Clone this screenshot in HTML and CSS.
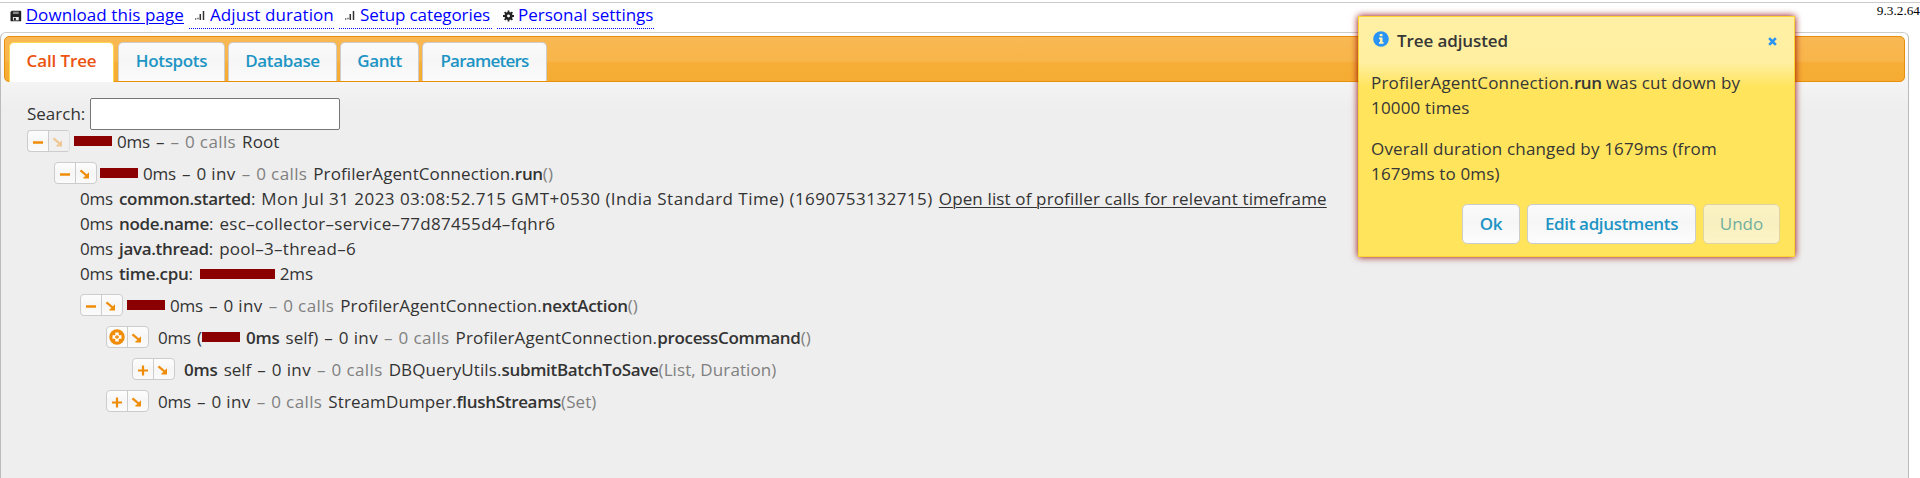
FILE: index.html
```html
<!DOCTYPE html>
<html lang="en">
<head>
<meta charset="utf-8">
<title>Call Tree</title>
<link rel="stylesheet" href="styles.css">
</head>
<body>
<svg class="defs" width="0" height="0">
  <symbol id="minus" viewBox="0 0 12 12"><path d="M1 6.500h10" stroke="currentColor" stroke-width="2.400"/></symbol>
  <symbol id="plus" viewBox="0 0 12 12"><path d="M1 6.500h10M6 1.500v10" stroke="currentColor" stroke-width="2.200"/></symbol>
  <symbol id="circle-plus" viewBox="0 0 16 16"><circle cx="8" cy="8" r="7.700" fill="currentColor"/><path d="M6.300 3.500h3.400v2.800h2.800v3.400H9.700v2.800H6.300V9.700H3.500V6.300h2.800z" fill="#fff"/><path d="M6 8h4M8 6v4" stroke="currentColor" stroke-width="1.300"/></symbol>
  <symbol id="arrow" viewBox="0 0 12 12"><path d="M1.500 2.300l6 5.200" stroke="currentColor" stroke-width="2.300"/><path d="M10 4.300V10.500H4.500V9l1.500-.5 2.500-2.700z" fill="currentColor"/></symbol>
  <symbol id="signal" viewBox="0 0 10 10"><path d="M0 9h1.300M2.300 8.500h1.400" stroke="#555" stroke-width="1.600"/><path d="M5.300 4v6M8.500 1v9" stroke="#333" stroke-width="1.500"/></symbol>
</svg>

<header class="toolbar">
  <a class="link download"><svg class="disk" viewBox="0 0 12 12"><path d="M2 .5h8.500a1 1 0 0 1 1 1v9a1 1 0 0 1-1 1h-9a1 1 0 0 1-1-1v-8.500z" fill="#222"/><path d="M3 1.500h6v2.500H3z" fill="#888"/><path d="M3 7h6v3.500h-6z" fill="#eee"/><path d="M4 8h2v2.500H4z" fill="#222"/></svg><span class="u">Download this page</span></a>
  <a class="link dotted"><svg class="sig-icon"><use href="#signal"/></svg>Adjust duration</a>
  <a class="link dotted setup"><svg class="sig-icon"><use href="#signal"/></svg>Setup categories</a>
  <a class="link dotted personal"><svg class="gear" viewBox="0 0 12 12"><circle cx="6" cy="6" r="3" fill="none" stroke="#222" stroke-width="2.800"/><path d="M6 0v2.500M6 9.500v2.500M0 6h2.500M9.500 6h2.500M1.800 1.800l1.800 1.800M8.400 8.400l1.800 1.800M1.800 10.200l1.800-1.800M8.400 3.600l1.800-1.800" stroke="#222" stroke-width="2"/></svg>Personal settings</a>
  <span class="version">9.3.2.64</span>
</header>

<main class="panel">
  <nav class="tabs">
    <a class="tab active">Call Tree</a>
    <a class="tab hotspots">Hotspots</a>
    <a class="tab database">Database</a>
    <a class="tab gantt">Gantt</a>
    <a class="tab parameters">Parameters</a>
  </nav>

  <section class="content">
    <label class="search">Search: <input type="text"></label>

    <div class="row level0">
      <span class="pair"><span class="btn"><svg class="ic"><use href="#minus"/></svg></span><span class="btn off"><svg class="ic arrow"><use href="#arrow"/></svg></span></span>
      <i class="bar"></i><span class="ms">0ms</span><span>–</span><span class="dim">–</span><span class="dim calls">0 calls</span><span class="name">Root</span>
    </div>
    <div class="row level1">
      <span class="pair"><span class="btn"><svg class="ic"><use href="#minus"/></svg></span><span class="btn"><svg class="ic arrow"><use href="#arrow"/></svg></span></span>
      <i class="bar"></i><span class="ms">0ms</span><span>–</span><span class="inv">0 inv</span><span class="dim">–</span><span class="dim calls">0 calls</span><span class="name">ProfilerAgentConnection.<b>run</b><span class="dim">()</span></span>
    </div>

    <div class="params">
      <div class="param"><span class="ms">0ms</span><span><b>common.started</b>:</span><span class="date">Mon Jul 31 2023 03:08:52.715 GMT+0530 (India Standard Time) (1690753132715)</span><a class="open">Open list of profiller calls for relevant timeframe</a></div>
      <div class="param"><span class="ms">0ms</span><span><b>node.name</b>:</span><span class="id">esc–collector–service–77d87455d4–fqhr6</span></div>
      <div class="param"><span class="ms">0ms</span><span><b>java.thread</b>:</span><span class="thread">pool–3–thread–6</span></div>
      <div class="param"><span class="ms">0ms</span><span><b>time.cpu</b>:</span><i class="bar wide"></i><span class="ms">2ms</span></div>
    </div>

    <div class="row level2">
      <span class="pair"><span class="btn"><svg class="ic"><use href="#minus"/></svg></span><span class="btn"><svg class="ic arrow"><use href="#arrow"/></svg></span></span>
      <i class="bar"></i><span class="ms">0ms</span><span>–</span><span class="inv">0 inv</span><span class="dim">–</span><span class="dim calls">0 calls</span><span class="name">ProfilerAgentConnection.<b>nextAction</b><span class="dim">()</span></span>
    </div>
    <div class="row level3 nobar">
      <span class="pair"><span class="btn"><svg class="ic big"><use href="#circle-plus"/></svg></span><span class="btn"><svg class="ic arrow"><use href="#arrow"/></svg></span></span>
      <span class="ms">0ms</span><span class="self">(<i class="bar"></i><b class="ms">0ms</b></span><span>self)</span><span>–</span><span class="inv">0 inv</span><span class="dim">–</span><span class="dim calls">0 calls</span><span class="name">ProfilerAgentConnection.<b>processCommand</b><span class="dim">()</span></span>
    </div>
    <div class="row level4 nobar">
      <span class="pair"><span class="btn"><svg class="ic"><use href="#plus"/></svg></span><span class="btn"><svg class="ic arrow"><use href="#arrow"/></svg></span></span>
      <b class="ms">0ms</b><span>self</span><span>–</span><span class="inv">0 inv</span><span class="dim">–</span><span class="dim calls">0 calls</span><span class="name">DBQueryUtils.<b>submitBatchToSave</b><span class="dim">(List, Duration)</span></span>
    </div>
    <div class="row level3 nobar">
      <span class="pair"><span class="btn"><svg class="ic"><use href="#plus"/></svg></span><span class="btn"><svg class="ic arrow"><use href="#arrow"/></svg></span></span>
      <span class="ms">0ms</span><span>–</span><span class="inv">0 inv</span><span class="dim">–</span><span class="dim calls">0 calls</span><span class="name">StreamDumper.<b>flushStreams</b><span class="dim">(Set)</span></span>
    </div>
  </section>
</main>

<aside class="notice">
  <div class="notice-head">
    <svg class="info" viewBox="0 0 16 16"><circle cx="8" cy="8" r="7.800" fill="#2a94f4"/><path d="M6.700 3h2.800v2.300H6.700zM6 6.500h3.500v4.500h1v1.800H6v-1.800h1V8.200H6z" fill="#fff3b8"/></svg>
    <span class="notice-title">Tree adjusted</span>
    <svg class="close" viewBox="0 0 10 10"><path d="M1.300 1.300l7.400 7.400M8.700 1.300l-7.400 7.400" stroke="#2a94f4" stroke-width="3"/></svg>
  </div>
  <p class="notice-text">ProfilerAgentConnection.<b>run</b> was cut down by<br>10000 times</p>
  <p class="notice-text">Overall duration changed by 1679ms (from<br>1679ms to 0ms)</p>
  <div class="actions">
    <button class="action ok">Ok</button><button class="action edit">Edit adjustments</button><button class="action undo">Undo</button>
  </div>
</aside>
</body>
</html>
```
FILE: styles.css
```css
* { box-sizing: border-box; }
body { margin: 0; height: 478px; overflow: hidden; position: relative; background: #fff; color: #333; font: 17px/25px "Open Sans", "Noto Sans", sans-serif; white-space: nowrap; display: flow-root; }
.defs { position: absolute; }
b { font-weight: 600; letter-spacing: -.32px; }
p { margin: 0; }

.toolbar { display: flex; margin-top: 2px; height: 30px; border-top: 1px solid #ccc; padding-left: 10px; }
.link { display: flex; align-items: center; height: 26px; padding-bottom: 2px; color: #00f; letter-spacing: .08px; }
.download { width: 174px; padding-bottom: 3px; }
.u { text-decoration: underline; text-underline-offset: 2px; text-decoration-thickness: 1px; }
.dotted { border-bottom: 1px dotted #00f; padding-left: 6px; margin-left: 5px; width: 145px; }
.setup { width: 153px; letter-spacing: -.1px; }
.personal { width: 157px; letter-spacing: 0; }
.disk { width: 12px; height: 12px; margin: 2px 4px 0 0; }
.sig-icon { width: 10px; height: 10px; margin: 1px 5px 0 0; flex: none; }
.gear { width: 11px; height: 12px; margin: 2px 4px 0 0; }
.version { margin-left: auto; color: #000; font: 13.300px/15px "Liberation Serif", serif; }

.panel { width: 1909px; height: 446px; border: 1px solid #bbb; border-top-color: #ccc; border-bottom: 0; border-radius: 6px 6px 0 0; padding: 3px; background: linear-gradient(#fff, #eee 76px); }
.tabs { display: flex; gap: 3px; height: 46px; padding: 5px 4px 0; border: 1px solid #e78f08; border-radius: 5px; background: linear-gradient(#f9b853, #f8b54a 24px, #f6ae36 26px, #f6ac33); }
.tab { display: flex; align-items: center; justify-content: center; height: 39px; padding-bottom: 3px; border: 1px solid #ccc; border-bottom: 0; border-radius: 5px 5px 0 0; background: linear-gradient(#fafafa, #f6f6f6 48%, #fbfbfb); color: #1c94c4; font-weight: 600; letter-spacing: -.35px; }
.active { width: 105px; height: 40px; padding-bottom: 4px; background: #fff; border-color: #fbd850; color: #eb5310; letter-spacing: -.12px; }
.hotspots { width: 107px; margin-left: 1px; }
.database { width: 109px; }
.gantt { width: 79px; }
.parameters { width: 125px; letter-spacing: -.75px; }

.content { padding: 16px 0 0 23px; }
.search { display: flex; align-items: center; gap: 5px; height: 32px; line-height: 22px; }
.search input { width: 250px; height: 32px; border: 1px solid #767676; border-radius: 2px; background: #fff; }

.row { display: flex; align-items: center; gap: 6px; height: 32px; }
.level0 { margin-top: -5px; }
.level1 { padding-left: 27px; }
.level2 { padding-left: 53px; }
.level3 { padding-left: 79px; }
.level4 { padding-left: 105px; }
.pair { display: flex; width: 43px; height: 22px; flex: none; border: 1px solid #ccc; border-radius: 4px; background: linear-gradient(#fdfdfd, #f6f6f6 50%, #fbfbfb); overflow: hidden; color: #ef8c08; margin-right: -2px; }
.level0 .pair { border-right-color: #ddd; }
.level1 .pair { margin-right: -3px; }
.nobar .pair { margin-right: 3px; }
.btn { flex: 1; display: flex; align-items: center; justify-content: center; }
.btn + .btn { border-left: 1px solid #ccc; }
.btn.off { background: #f0f0f0; }
.btn.off .ic { opacity: .4; }
.ic { width: 12px; height: 12px; margin-top: 2px; }
.big { width: 16px; height: 16px; margin-top: 0; }
.arrow { margin-right: 2px; }
.bar { display: block; flex: none; width: 38px; height: 10px; margin-right: -1px; background: #8b0000; }
.wide { width: 75px; margin-left: 1px; }
.ms { letter-spacing: -.2px; }
.calls { letter-spacing: .38px; }
.inv { letter-spacing: .38px; }
.dim { color: #808080; }
.name { letter-spacing: .1px; }
.self { display: flex; align-items: center; }
.self b { margin-left: 7px; }

.params { margin: -3px 0 3px; padding-left: 53px; }
.param { display: flex; align-items: center; gap: 6px; height: 25px; }
.date { letter-spacing: .46px; }
.open { letter-spacing: .14px; text-decoration: underline; text-underline-offset: 2px; text-decoration-thickness: 1px; }
.id { letter-spacing: .3px; }
.thread { letter-spacing: .25px; }

.notice { position: absolute; left: 1358px; top: 16px; width: 437px; height: 241px; padding: 11px 14px 0 12px; border: 1px solid #fed22f; background: linear-gradient(#fff0a5, #ffefa0 46px, #ffe45c 70px); box-shadow: 0 0 7px #900000; color: #363636; }
.notice-head { display: flex; align-items: center; height: 25px; margin-bottom: 17px; }
.info { width: 16px; height: 16px; margin: -4px 8px 0 2px; }
.notice-title { font-weight: 600; letter-spacing: -.1px; }
.close { width: 9px; height: 9px; margin: 2px 3px 0 auto; }
.notice-text { margin-bottom: 16px; letter-spacing: .16px; }
.notice-text b { letter-spacing: -.5px; }
.actions { display: flex; justify-content: flex-end; gap: 7px; margin-top: 18px; }
.action { height: 40px; padding: 0 0 2px; border: 1px solid #ccc; border-radius: 5px; background: linear-gradient(#fafafa, #f6f6f6 48%, #fdfdfd); color: #1c94c4; font: 600 17px/25px "Open Sans", sans-serif; letter-spacing: -.35px; }
.ok { width: 58px; }
.edit { width: 169px; }
.undo { width: 77px; font-weight: 400; opacity: .65; letter-spacing: 0; }
```
